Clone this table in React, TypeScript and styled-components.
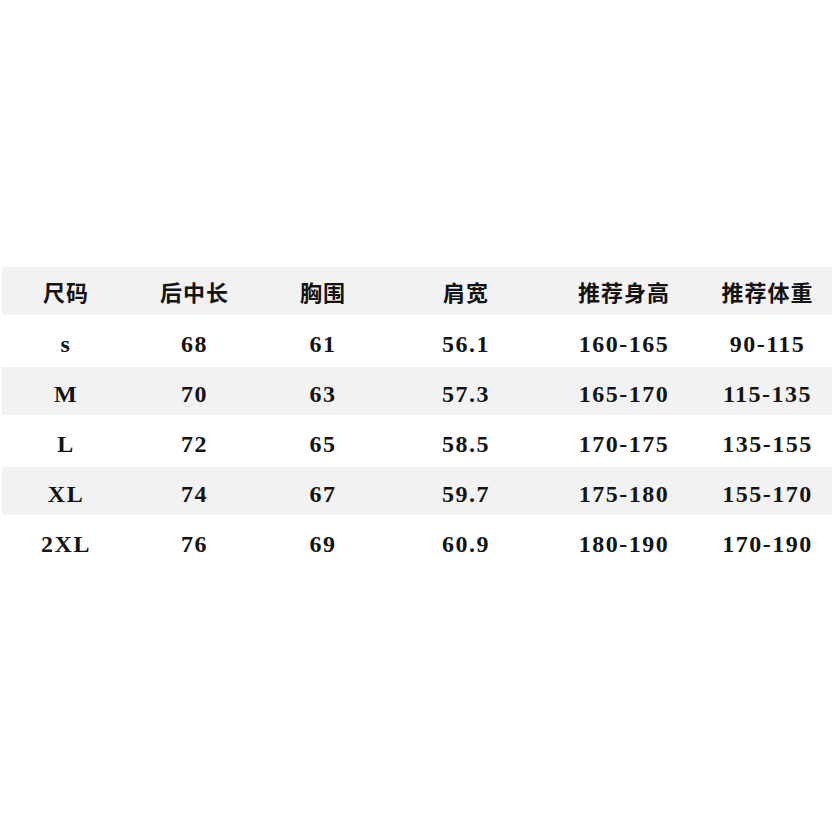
import React from "react";
import styled, { createGlobalStyle } from "styled-components";

const GlobalStyle = createGlobalStyle`
    body {
        margin: 0;
        background-color: #ffffff;
    }
`;

const Page = styled.div`
    width: 834px;
    height: 834px;
    padding-top: 267px;
    padding-left: 2px;
    box-sizing: border-box;
`;

const Table = styled.div`
    width: 830px;
    display: flex;
    flex-direction: column;
`;

const Row = styled.div<{ $shaded: boolean }>`
    display: grid;
    grid-template-columns: 128px 129px 128px 158px 158px 129px;
    height: ${(p) => (p.$shaded ? 48 : 52)}px;
    background-color: ${(p) => (p.$shaded ? "#f2f2f2" : "#ffffff")};
`;

const HeadCell = styled.div`
    display: flex;
    align-items: center;
    justify-content: center;
    font-family: "Noto Sans CJK SC", sans-serif;
    font-weight: 700;
    font-size: 22px;
    letter-spacing: 1px;
    color: #141414;
`;

const Cell = styled.div`
    display: flex;
    align-items: center;
    justify-content: center;
    padding-top: 6px;
    font-family: "Liberation Serif", serif;
    font-weight: 700;
    font-size: 24px;
    letter-spacing: 1.5px;
    color: #141414;
`;

const headers = ["尺码", "后中长", "胸围", "肩宽", "推荐身高", "推荐体重"];

const sizes = [
    ["s", "68", "61", "56.1", "160-165", "90-115"],
    ["M", "70", "63", "57.3", "165-170", "115-135"],
    ["L", "72", "65", "58.5", "170-175", "135-155"],
    ["XL", "74", "67", "59.7", "175-180", "155-170"],
    ["2XL", "76", "69", "60.9", "180-190", "170-190"],
];

function App() {
    return (
        <>
            <GlobalStyle />
            <Page>
                <Table>
                    <Row $shaded={true}>
                        {headers.map((h) => (
                            <HeadCell key={h}>{h}</HeadCell>
                        ))}
                    </Row>
                    {sizes.map((row, i) => (
                        <Row key={row[0]} $shaded={i % 2 === 1}>
                            {row.map((v, j) => (
                                <Cell key={j}>{v}</Cell>
                            ))}
                        </Row>
                    ))}
                </Table>
            </Page>
        </>
    );
}

export default App;
